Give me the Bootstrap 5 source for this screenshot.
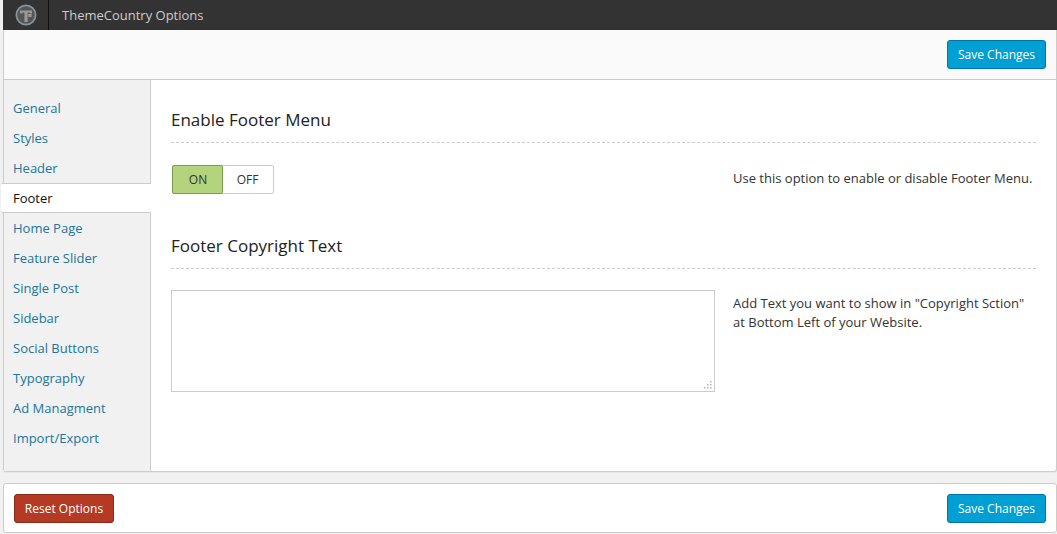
<!DOCTYPE html>
<html lang="en">
<head>
<meta charset="utf-8">
<title>ThemeCountry Options</title>
<link rel="stylesheet" href="https://cdn.jsdelivr.net/npm/bootstrap@5.3.0/dist/css/bootstrap.min.css">
<style>
html,body{height:534px;overflow:hidden}
body{background:#f1f1f1;font-family:"Open Sans","Liberation Sans",sans-serif;font-size:13px;line-height:20px;color:#333;padding-left:3px}
.opt-top{height:30px;background:#333;color:#ccc}
.opt-logo{width:46px;height:30px;border-right:1px solid #111}
.opt-brand{padding-left:13px;font-size:13px}
.opt-panel{background:#fff;border:1px solid #ccc;border-top:0;border-radius:0 0 3px 3px;box-shadow:0 1px 1px rgba(0,0,0,.04)}
.opt-sub{height:50px;background:#fafafa;border-bottom:1px solid #ccc;padding:10px 10px 0 0}
.opt-main{height:391px}
.opt-side{width:147px;background:#f1f1f1;border-right:1px solid #ccc;padding:13px 0 0;list-style:none;margin:0;flex:none}
.opt-side li{height:30px;line-height:30px;padding-left:9px;color:#21759b}
.opt-side li.opt-on{margin-left:-3px;margin-right:-1px;padding-left:12px;background:#fff;color:#111;border-top:1px solid #ccc;border-bottom:1px solid #ccc;border-radius:2px 0 0 2px;line-height:28px;position:relative}
.opt-body{padding:0 20px;flex:1 1 0;min-width:0}
.opt-title{font-size:17px;line-height:24px;font-weight:400;color:#222;margin:0;padding-top:28px;padding-bottom:10px;border-bottom:1px dashed #ccc}
.opt-row{padding-top:22px;height:63px}
.opt-ctl{width:544px;flex:none}
.opt-desc{margin-left:18px;width:305px;color:#333;line-height:19px}
.opt-switch{margin-left:1px;width:102px;height:29px;border:1px solid #ccc;border-radius:2px;background:#fff}
.opt-switch span{display:block;text-align:center;line-height:27px;font-size:12px;color:#333}
.opt-yes{width:51px;margin:-1px 0 -1px -1px;height:29px;background:#b3d37c;border:1px solid #7f9c4d;border-radius:2px;padding-left:1px;line-height:27px!important}
.opt-no{flex:1;padding-right:1px}
.opt-wrap{position:relative;width:544px;height:102px}
.opt-area{display:block;width:544px;height:102px;border:1px solid #ccc;background:#fff;border-radius:0;outline:0;padding:4px;resize:none}
.opt-grip{position:absolute;right:3px;bottom:3px;display:block}
.opt-row2{padding-top:21px}
.btn.opt-save,.btn.opt-reset{font-size:12px;line-height:18px;padding:4px 0;height:29px;border-radius:3px;color:#fff;white-space:nowrap}
.btn.opt-save{background:#009fd4;border:1px solid #0073aa;width:99px}
.btn.opt-reset{background:#b53a24;border:1px solid #8a2a18;width:100px}
.opt-foot{height:50px;margin-top:11px;background:#fff;border:1px solid #ccc;border-radius:3px;padding:10px 10px 0}
</style>
</head>
<body>
<div class="opt-top d-flex align-items-center">
  <div class="opt-logo d-flex align-items-center justify-content-center">
    <svg width="22" height="22" viewBox="0 0 22 22" fill="none" aria-hidden="true">
      <circle cx="11" cy="11" r="9.6" fill="#555" stroke="#8a9299" stroke-width="1.8"/>
      <path d="M5 6.6H17V9.4H14.6V8.6H12.6V18H9.4V8.6H7.4V9.4H5Z" fill="#999"/>
      <path d="M13.2 10H16.6V13H13.2Z" fill="#999"/>
    </svg>
  </div>
  <div class="opt-brand">ThemeCountry Options</div>
</div>
<div class="opt-panel">
  <div class="opt-sub d-flex justify-content-end">
    <button type="button" class="btn opt-save">Save Changes</button>
  </div>
  <div class="opt-main d-flex">
    <ul class="opt-side">
      <li>General</li>
      <li>Styles</li>
      <li>Header</li>
      <li class="opt-on">Footer</li>
      <li>Home Page</li>
      <li>Feature Slider</li>
      <li>Single Post</li>
      <li>Sidebar</li>
      <li>Social Buttons</li>
      <li>Typography</li>
      <li>Ad Managment</li>
      <li>Import/Export</li>
    </ul>
    <div class="opt-body">
      <h3 class="opt-title">Enable Footer Menu</h3>
      <div class="opt-row d-flex">
        <div class="opt-ctl">
          <div class="opt-switch d-flex">
            <span class="opt-yes">ON</span>
            <span class="opt-no">OFF</span>
          </div>
        </div>
        <div class="opt-desc pt-1">Use this option to enable or disable Footer Menu.</div>
      </div>
      <h3 class="opt-title">Footer Copyright Text</h3>
      <div class="opt-row opt-row2 d-flex">
        <div class="opt-ctl">
          <div class="opt-wrap">
            <textarea class="opt-area" aria-label="Footer Copyright Text"></textarea>
            <svg class="opt-grip" width="9" height="9" viewBox="0 0 9 9" aria-hidden="true" fill="#b5b5b5">
              <rect x="7" y="1" width="1.5" height="1.5"/>
              <rect x="4" y="4" width="1.5" height="1.5"/><rect x="7" y="4" width="1.5" height="1.5"/>
              <rect x="1" y="7" width="1.5" height="1.5"/><rect x="4" y="7" width="1.5" height="1.5"/><rect x="7" y="7" width="1.5" height="1.5"/>
            </svg>
          </div>
        </div>
        <div class="opt-desc pt-1">Add Text you want to show in "Copyright Sction" at Bottom Left of your Website.</div>
      </div>
    </div>
  </div>
</div>
<div class="opt-foot d-flex justify-content-between">
  <button type="button" class="btn opt-reset">Reset Options</button>
  <button type="button" class="btn opt-save">Save Changes</button>
</div>
<script src="https://cdn.jsdelivr.net/npm/bootstrap@5.3.0/dist/js/bootstrap.bundle.min.js"></script>
</body>
</html>
